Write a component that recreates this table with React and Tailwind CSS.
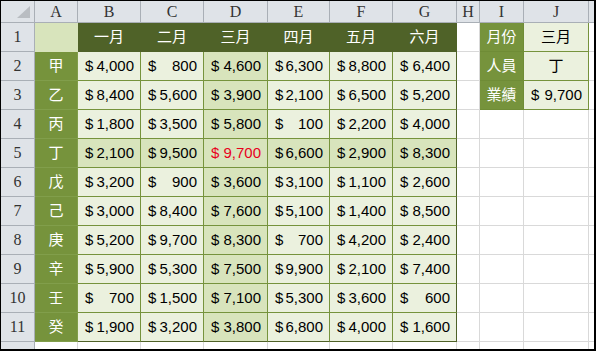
import React from 'react';

const cols = ['A', 'B', 'C', 'D', 'E', 'F', 'G', 'H', 'I', 'J', ''];
const months = ['一月', '二月', '三月', '四月', '五月', '六月'];

const rows = [
    ['甲', 4000, 800, 4600, 6300, 8800, 6400],
    ['乙', 8400, 5600, 3900, 2100, 6500, 5200],
    ['丙', 1800, 3500, 5800, 100, 2200, 4000],
    ['丁', 2100, 9500, 9700, 6600, 2900, 8300],
    ['戊', 3200, 900, 3600, 3100, 1100, 2600],
    ['己', 3000, 8400, 7600, 5100, 1400, 8500],
    ['庚', 5200, 9700, 8300, 700, 4200, 2400],
    ['辛', 5900, 5300, 7500, 9900, 2100, 7400],
    ['壬', 700, 1500, 7100, 5300, 3600, 600],
    ['癸', 1900, 3200, 3800, 6800, 4000, 1600],
];

const panel = [
    ['月份', '三月'],
    ['人員', '丁'],
    ['業績', 9700],
];

const fmt = (n) => n.toLocaleString('en-US');

// accounting style: "$" pinned left, amount pinned right
function Money({ value, red }) {
    return (
        <div className={`flex h-full items-center justify-between pl-[7px] pr-[6px] ${red ? 'text-[#e8001c]' : 'text-black'}`}>
            <span>$</span>
            <span>{fmt(value)}</span>
        </div>
    );
}

function Empty({ last }) {
    return <div className={`bg-white border-[#d9d9d9] border-b ${last ? '' : 'border-r'}`} />;
}

function RowHead({ children }) {
    return (
        <div className="bg-[#dfe3e8] border-r border-b border-[#a9afb6] flex items-end justify-center pb-[2px] font-['Liberation_Serif',serif] text-[16px] text-[#333]">
            {children}
        </div>
    );
}

export default function App() {
    return (
        <div className="w-[596px] h-[351px] bg-white border-l border-t border-r-2 border-b-2 border-black overflow-hidden font-['Liberation_Sans','Noto_Sans_CJK_TC',sans-serif] text-[15px]">
            <div className="grid h-full grid-cols-[34px_43px_63px_63px_64px_62px_63px_64px_23px_44px_65px_1fr] grid-rows-[22px_repeat(11,29px)_1fr]">
                {/* column letters */}
                <div className="relative bg-[#dfe3e8] border-r border-b border-[#a9afb6]">
                    <svg className="absolute right-[4px] bottom-[4px]" width="13" height="12" viewBox="0 0 13 12">
                        <polygon points="13,0 13,12 0,12" fill="#b9bdc2" />
                    </svg>
                </div>
                {cols.map((c, i) => (
                    <div
                        key={i}
                        className={`bg-[#dfe3e8] border-b border-[#a9afb6] flex items-center justify-center font-['Liberation_Serif',serif] text-[16px] text-[#333] ${i < cols.length - 1 ? 'border-r' : ''}`}
                    >
                        {c}
                    </div>
                ))}

                {/* row 1 */}
                <RowHead>1</RowHead>
                <div className="bg-[#d8e4bc] border-r border-b border-[#d8e4bc]" />
                {months.map((m, i) => (
                    <div
                        key={m}
                        className={`bg-[#4f6228] border-b border-r text-white flex items-center justify-center ${i === 5 ? 'border-[#4f6228]' : 'border-[#4f6228]'}`}
                    >
                        {m}
                    </div>
                ))}
                <Empty />
                <div className="bg-[#76933c] border-r border-b border-[#6f8c36] text-white flex items-center justify-center">{panel[0][0]}</div>
                <div className="bg-[#ebf1de] border-r border-b border-[#76933c] text-black flex items-center justify-center">{panel[0][1]}</div>
                <Empty last />

                {rows.map((r, ri) => {
                    const rowNo = ri + 2;
                    const hot = rowNo === 5;
                    const lastRow = ri === rows.length - 1;
                    return (
                        <React.Fragment key={rowNo}>
                            <RowHead>{rowNo}</RowHead>
                            <div className="bg-[#76933c] border-r border-b border-[#819e4b] text-white flex items-center justify-center">
                                {r[0]}
                            </div>
                            {r.slice(1).map((v, ci) => {
                                const isD = ci === 2;
                                const bg = hot || isD ? 'bg-[#d8e4bc]' : 'bg-[#ebf1de]';
                                const br = ci === 5 ? 'border-r-[#4f6228]' : 'border-r-[#76933c]';
                                const bb = lastRow ? 'border-b-[#4f6228]' : 'border-b-[#76933c]';
                                return (
                                    <div key={ci} className={`${bg} border-r border-b ${br} ${bb}`}>
                                        <Money value={v} red={hot && isD} />
                                    </div>
                                );
                            })}
                            <Empty />
                            {rowNo <= 3 ? (
                                <>
                                    <div className="bg-[#76933c] border-r border-b border-[#6f8c36] text-white flex items-center justify-center">
                                        {panel[rowNo - 1][0]}
                                    </div>
                                    <div className="bg-[#ebf1de] border-r border-b border-[#76933c]">
                                        {typeof panel[rowNo - 1][1] === 'number' ? (
                                            <Money value={panel[rowNo - 1][1]} />
                                        ) : (
                                            <div className="h-full flex items-center justify-center text-black">{panel[rowNo - 1][1]}</div>
                                        )}
                                    </div>
                                </>
                            ) : (
                                <>
                                    <Empty />
                                    <Empty />
                                </>
                            )}
                            <Empty last />
                        </React.Fragment>
                    );
                })}

                {/* partial row 12 */}
                <div className="bg-[#dfe3e8] border-r border-[#a9afb6]" />
                {cols.map((c, i) => (
                    <div key={i} className={`bg-white border-[#d9d9d9] ${i < cols.length - 1 ? 'border-r' : ''}`} />
                ))}
            </div>
        </div>
    );
}
